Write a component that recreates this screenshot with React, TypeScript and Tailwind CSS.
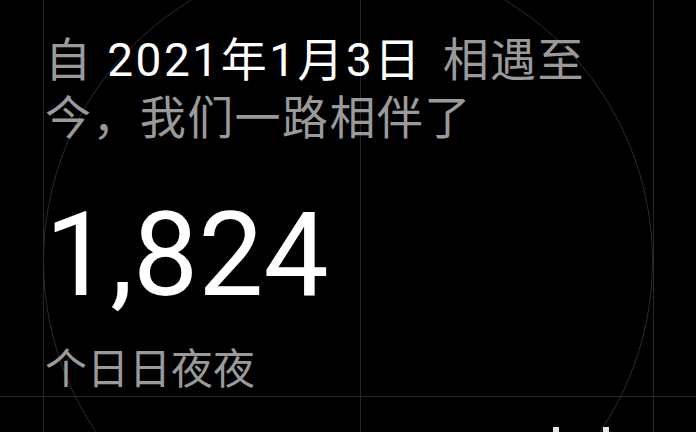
import React from "react";

export default function App() {
  const font = { fontFamily: 'Roboto, "Noto Sans CJK SC", sans-serif' };
  return (
    <div className="relative w-[696px] h-[432px] overflow-hidden bg-black" style={font}>
      {/* decorative guide lines */}
      <div className="absolute left-[43px] top-0 h-full w-px bg-[#262626]" />
      <div className="absolute left-[360px] top-0 h-full w-px bg-[#262626]" />
      <div className="absolute left-[653px] top-0 h-full w-px bg-[#262626]" />
      <div className="absolute left-0 top-[396px] w-full h-px bg-[#262626]" />
      <div className="absolute left-[43px] top-[-44px] w-[610px] h-[610px] rounded-full border-[1.5px] border-[#2c2c2c]" />

      <div className="relative flex flex-col pl-[45px] pt-[31px]">
        <p className="w-[600px] text-[46px] leading-[58px] tracking-[1.4px] text-[#9a9a9a]">
          自 <span className="ml-[2px] mr-[7px] text-white tracking-[2.5px]">2021年1月3日</span> 相遇至今，我们一路相伴了
        </p>
        <div className="mt-[50px] text-[116px] leading-none text-white">1,824</div>
        <div className="mt-[31px] text-[42px] leading-[52px] text-[#9a9a9a]">个日日夜夜</div>
      </div>

      <div className="absolute left-[553px] top-[427px] w-[6px] h-[6px] bg-[#e6e6e6]" />
      <div className="absolute left-[603px] top-[427px] w-[6px] h-[6px] bg-[#e6e6e6]" />
    </div>
  );
}
